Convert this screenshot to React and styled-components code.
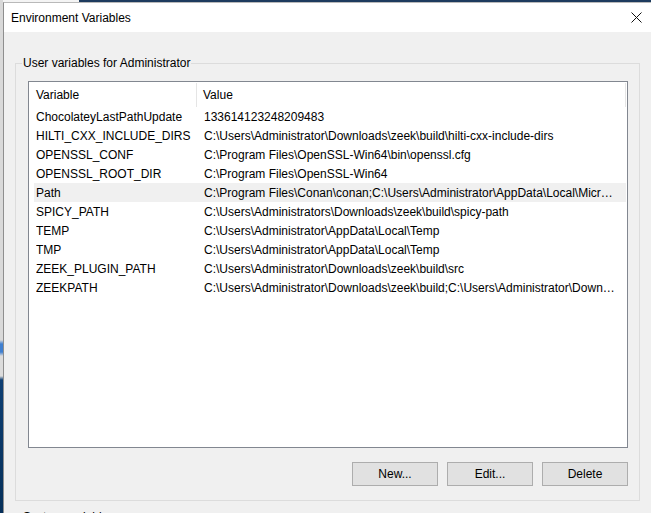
import React from "react";
import styled, { createGlobalStyle } from "styled-components";

const Global = createGlobalStyle`
  html, body { margin: 0; padding: 0; }
  body {
    font-family: "Liberation Sans", Arial, sans-serif;
    font-size: 12px;
    color: #000;
    background: #f2f2f2;
  }
`;

const Desktop = styled.div`
  width: 651px;
  height: 513px;
  overflow: hidden;
  box-sizing: border-box;
  padding: 2px 0 0 3px;
  display: flex;
  background:
    linear-gradient(#1d3b5e, #1d3b5e) 79px 0 / 572px 2px no-repeat,
    linear-gradient(
      to bottom,
      #d9d9d9 0px,
      #d9d9d9 340px,
      #3f7fd0 344px,
      #3f7fd0 352px,
      #dcdcdc 356px,
      #dcdcdc 376px,
      #0e3f73 380px,
      #06305a 513px
    ) 0 0 / 3px 513px no-repeat,
    #f4f4f4;
`;

const Window = styled.div`
  flex: 1;
  display: flex;
  flex-direction: column;
  background: #f0f0f0;
  border-left: 1px solid #8e8e8e;
  border-top: 1px solid #b9b9b9;
  min-width: 0;
`;

const TitleBar = styled.div`
  height: 29px;
  flex: none;
  background: #ffffff;
  display: flex;
  align-items: center;
  justify-content: space-between;
  padding: 0 9px 0 7px;
`;

const Title = styled.span`
  font-size: 12px;
  color: #000;
`;

const CloseIcon = styled.svg`
  width: 11px;
  height: 11px;
  display: block;
`;

const Body = styled.div`
  flex: 1;
  display: flex;
  flex-direction: column;
  padding: 31px 11px 0 11px;
  gap: 16px;
`;

const Group = styled.div`
  position: relative;
  flex: none;
  border: 1px solid #dcdcdc;
  padding: 17px 11px 14px 12px;
  display: flex;
  flex-direction: column;
`;

const GroupLabel = styled.span`
  position: absolute;
  left: 6px;
  top: -8px;
  padding: 0 1px;
  background: #f0f0f0;
  line-height: 15px;
`;

const List = styled.div`
  height: 367px;
  box-sizing: border-box;
  border: 1px solid #828790;
  background: #ffffff;
  display: flex;
  flex-direction: column;
  overflow: hidden;
`;

const Header = styled.div`
  height: 24px;
  flex: none;
  display: grid;
  grid-template-columns: 168px 1fr;
  border-right: 1px solid #e5e5e5;
  margin: 1px 0 0 0;
  width: 596px;
`;

const HeaderCell = styled.div`
  display: flex;
  align-items: center;
  padding-left: ${(p) => p.$pad}px;
  border-right: ${(p) => (p.$sep ? "1px solid #e5e5e5" : "none")};
`;

const Row = styled.div`
  height: 19px;
  flex: none;
  margin: 0 1px 0 5px;
  padding: 0 9px 0 2px;
  display: grid;
  grid-template-columns: 168px minmax(0, 1fr);
  align-items: center;
  background: ${(p) => (p.$hover ? "#f0f0f0" : "transparent")};
`;

const Cell = styled.span`
  white-space: nowrap;
  overflow: hidden;
  text-overflow: ellipsis;
`;

const ButtonRow = styled.div`
  display: flex;
  justify-content: flex-end;
  gap: 9px;
  margin-top: 14px;
`;

const Button = styled.button`
  width: 86px;
  height: 24px;
  box-sizing: border-box;
  background: #e1e1e1;
  border: 1px solid #adadad;
  font-family: inherit;
  font-size: 12px;
  color: #000;
  padding: 0;
  margin: 0;
`;

const rows = [
  ["ChocolateyLastPathUpdate", "133614123248209483"],
  ["HILTI_CXX_INCLUDE_DIRS", "C:\\Users\\Administrator\\Downloads\\zeek\\build\\hilti-cxx-include-dirs"],
  ["OPENSSL_CONF", "C:\\Program Files\\OpenSSL-Win64\\bin\\openssl.cfg"],
  ["OPENSSL_ROOT_DIR", "C:\\Program Files\\OpenSSL-Win64"],
  ["Path", "C:\\Program Files\\Conan\\conan;C:\\Users\\Administrator\\AppData\\Local\\Microsoft\\WindowsApps;"],
  ["SPICY_PATH", "C:\\Users\\Administrators\\Downloads\\zeek\\build\\spicy-path"],
  ["TEMP", "C:\\Users\\Administrator\\AppData\\Local\\Temp"],
  ["TMP", "C:\\Users\\Administrator\\AppData\\Local\\Temp"],
  ["ZEEK_PLUGIN_PATH", "C:\\Users\\Administrator\\Downloads\\zeek\\build\\src"],
  ["ZEEKPATH", "C:\\Users\\Administrator\\Downloads\\zeek\\build;C:\\Users\\Administrator\\Downloads\\zeek"],
];

export default function App() {
  return (
    <>
      <Global />
      <Desktop>
        <Window>
          <TitleBar>
            <Title>Environment Variables</Title>
            <CloseIcon viewBox="0 0 11 11">
              <path d="M0.5 0.5 L10.5 10.5 M10.5 0.5 L0.5 10.5" stroke="#111" strokeWidth="1" fill="none" />
            </CloseIcon>
          </TitleBar>
          <Body>
            <Group>
              <GroupLabel>User variables for Administrator</GroupLabel>
              <List>
                <Header>
                  <HeaderCell $pad={7} $sep>Variable</HeaderCell>
                  <HeaderCell $pad={6}>Value</HeaderCell>
                </Header>
                {rows.map(([k, v]) => (
                  <Row key={k} $hover={k === "Path"}>
                    <Cell>{k}</Cell>
                    <Cell>{v}</Cell>
                  </Row>
                ))}
              </List>
              <ButtonRow>
                <Button>New...</Button>
                <Button>Edit...</Button>
                <Button>Delete</Button>
              </ButtonRow>
            </Group>
            <Group>
              <GroupLabel>System variables</GroupLabel>
              <List />
            </Group>
          </Body>
        </Window>
      </Desktop>
    </>
  );
}
